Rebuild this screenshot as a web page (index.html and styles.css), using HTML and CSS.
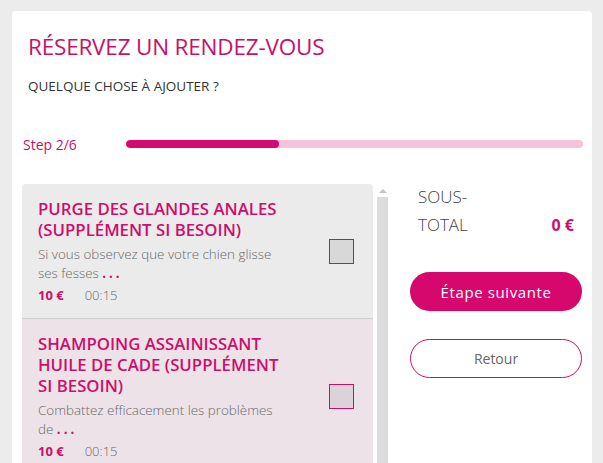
FILE: index.html
```html
<!DOCTYPE html>
<html lang="fr">
<head>
<meta charset="utf-8">
<link rel="stylesheet" href="styles.css">
</head>
<body>
<div class="card">
  <div class="head">
    <h1 class="title">RÉSERVEZ UN RENDEZ-VOUS</h1>
    <p class="subtitle">QUELQUE CHOSE À AJOUTER ?</p>
  </div>
  <div class="steps">
    <span class="step-label">Step 2/6</span>
    <div class="track"><div class="fill" style="width:33.4%"></div></div>
  </div>
  <div class="body">
    <div class="list">
      <div class="item">
        <div class="info">
          <div class="name">PURGE DES GLANDES ANALES (SUPPLÉMENT SI BESOIN)</div>
          <div class="desc">Si vous observez que votre chien glisse ses fesses <span class="more">...</span></div>
          <div class="meta"><span class="price">10 €</span><span class="dur">00:15</span></div>
        </div>
        <span class="check"></span>
      </div>
      <div class="item alt">
        <div class="info">
          <div class="name">SHAMPOING ASSAINISSANT HUILE DE CADE (SUPPLÉMENT SI BESOIN)</div>
          <div class="desc">Combattez efficacement les problèmes de <span class="more">...</span></div>
          <div class="meta"><span class="price">10 €</span><span class="dur">00:15</span></div>
        </div>
        <span class="check"></span>
      </div>
    </div>
    <div class="scrollbar">
      <span class="arrow"></span>
      <span class="sb-track"></span>
    </div>
    <div class="side">
      <div class="subtotal">
        <span class="st-label">SOUS-TOTAL</span>
        <span class="st-value">0 €</span>
      </div>
      <button class="btn primary">Étape suivante</button>
      <button class="btn secondary">Retour</button>
    </div>
  </div>
</div>
</body>
</html>
```
FILE: styles.css
```css
html, body {
  margin: 0;
  padding: 0;
  background: #ececec;
  height: 100%;
  overflow: hidden;
}
body {
  font-family: "Open Sans", "Liberation Sans", sans-serif;
  color: #333;
}
.card {
  margin: 11px 11px 0 12px;
  background: #fff;
  border-radius: 4px;
  height: 480px;
}
.head {
  padding: 22px 16px 0 16px;
}
.title {
  margin: 0;
  font-size: 22.5px;
  font-weight: 400;
  line-height: 28px;
  color: #c8106a;
  letter-spacing: -0.2px;
}
.subtitle {
  margin: 16px 0 0 0;
  font-size: 13.5px;
  line-height: 18px;
  color: #333;
}
.steps {
  display: flex;
  align-items: center;
  padding: 0 9px 0 11px;
  margin-top: 40px;
  height: 18px;
}
.step-label {
  width: 103px;
  font-size: 14px;
  color: #c8106a;
}
.track {
  flex: 1;
  height: 8px;
  border-radius: 4px;
  background: #f5c2d9;
  overflow: hidden;
}
.fill {
  height: 100%;
  background: #d30a6f;
  border-radius: 4px;
}
.body {
  display: flex;
  margin-top: 31px;
  padding-left: 10px;
}
.list {
  width: 351px;
  border-radius: 4px 4px 0 0;
  overflow: hidden;
}
.item {
  display: flex;
  align-items: center;
  justify-content: space-between;
  padding: 14px 19px 14px 16px;
  background: #ebebeb;
  border-bottom: 1px solid #cfcfcf;
}
.item.alt {
  background: #ede2e7;
  border-bottom: none;
}
.info {
  width: 248px;
}
.name {
  font-size: 16.8px;
  font-weight: 600;
  line-height: 21px;
  color: #cc0e6c;
}
.desc {
  margin-top: 5px;
  font-size: 13.4px;
  font-weight: 300;
  line-height: 19px;
  color: #6a6a6a;
}
.more {
  color: #cc0e6c;
  font-weight: 700;
  letter-spacing: 3px;
}
.meta {
  margin-top: 3px;
  font-size: 13px;
  line-height: 18px;
}
.price {
  font-weight: 700;
  color: #cc0e6c;
  margin-right: 21px;
}
.dur {
  color: #666;
  font-weight: 300;
}
.check {
  width: 23px;
  height: 23px;
  border: 1px solid #cc0e6c;
  background: #d8d8d8;
  flex: none;
}
.alt .check {
  background: #dcd3d8;
}
.scrollbar {
  width: 11px;
  margin-left: 4px;
  display: flex;
  flex-direction: column;
  align-items: center;
  padding-top: 5px;
}
.arrow {
  width: 0;
  height: 0;
  border-left: 4px solid transparent;
  border-right: 4px solid transparent;
  border-bottom: 4px solid #c4c4c4;
}
.sb-track {
  margin-top: 4px;
  width: 11px;
  flex: 1;
  background: #dcdcdc;
}
.side {
  margin-left: 22px;
  width: 172px;
  display: flex;
  flex-direction: column;
}
.subtotal {
  display: flex;
  justify-content: space-between;
  align-items: flex-end;
  padding: 0 8px;
  margin-top: -1px;
}
.st-label {
  width: 70px;
  font-size: 17px;
  font-weight: 300;
  line-height: 28px;
  color: #444;
}
.st-value {
  font-size: 16px;
  font-weight: 700;
  line-height: 28px;
  color: #cc0e6c;
}
.btn {
  font-family: "Open Sans", "Liberation Sans", sans-serif;
  font-size: 14px;
  height: 39px;
  border-radius: 20px;
  cursor: pointer;
}
.primary {
  margin-top: 33px;
  background: #d6086e;
  border: none;
  color: #fff;
  font-size: 15px;
  letter-spacing: 0.6px;
}
.secondary {
  margin-top: 28px;
  background: #fff;
  border: 1px solid #cc0e6c;
  color: #666;
}
```
